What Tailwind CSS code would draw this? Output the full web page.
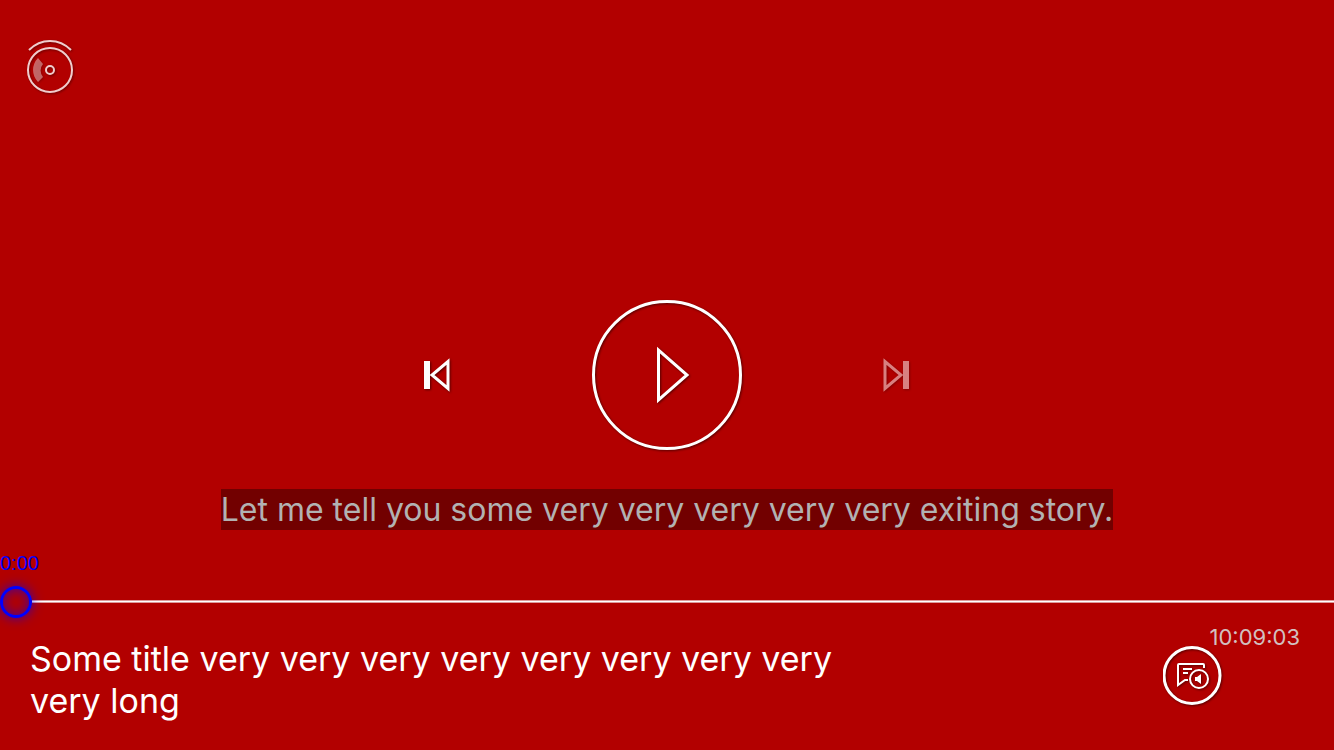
<!DOCTYPE html>
<html lang="en">
<head>
<meta charset="utf-8">
<meta name="viewport" content="width=device-width, initial-scale=1">
<title>Video player</title>
<script src="https://cdn.jsdelivr.net/npm/@tailwindcss/browser@4"></script>
</head>
<body class="bg-[#b20000] font-['Inter','Liberation_Sans',sans-serif] text-white">
<main class="flex min-h-screen flex-col overflow-hidden">
  <header class="flex flex-1 basis-0 items-start px-6">
    <button type="button" aria-label="Camera" class="mt-9 opacity-80">
      <svg class="block h-[60px] w-[52px] drop-shadow-[1px_1px_1px_rgba(0,0,0,0.5)]" viewBox="0 0 52 60" fill="none" stroke="#fff" stroke-width="2">
        <path d="M5 14Q14 5 26 5T47 14"/>
        <circle cx="26" cy="34" r="22"/>
        <circle cx="26" cy="34" r="4"/>
        <path d="M14 22A17 17 0 0 0 14 46L19 41A10 10 0 0 1 19 28Z" fill="#fff" stroke="none" opacity=".5"/>
      </svg>
    </button>
  </header>

  <div class="flex items-center justify-center gap-[137px]">
    <button type="button" aria-label="Previous">
      <svg class="block h-9 w-8 drop-shadow-[1px_1px_1px_rgba(0,0,0,0.5)]" viewBox="0 0 32 36">
        <path d="M2 4H8V32H2Z" fill="#fff"/>
        <path d="M26 4.5V31.5L10 18Z" fill="none" stroke="#fff" stroke-width="3"/>
      </svg>
    </button>
    <button type="button" aria-label="Play">
      <svg class="block h-[152px] w-[152px] drop-shadow-[1px_1px_1px_rgba(0,0,0,0.5)]" viewBox="0 0 152 152" fill="none" stroke="#fff" stroke-width="3">
        <circle cx="76" cy="76" r="73.5"/>
        <path d="M67.5 51V101L96 76Z"/>
      </svg>
    </button>
    <button type="button" aria-label="Next" class="opacity-50" disabled>
      <svg class="block h-9 w-8 drop-shadow-[1px_1px_1px_rgba(0,0,0,0.5)]" viewBox="0 0 32 36">
        <path d="M23 4H29V32H23Z" fill="#fff"/>
        <path d="M5 4.5V31.5L21 18Z" fill="none" stroke="#fff" stroke-width="3"/>
      </svg>
    </button>
  </div>

  <section class="flex flex-1 basis-0 flex-col">
    <p class="mt-[38px] self-center bg-[#720000] text-[32px] leading-[41px] text-[#b2b2b2]">Let me tell you some very very very very very exiting story.</p>
    <label for="seek" class="mt-[21px] font-['Liberation_Sans',sans-serif] text-[20px] leading-6 text-[#0000ff]">0:00</label>
    <input id="seek" type="range" min="0" max="100" value="0" class="mt-[11px] block h-8 w-full appearance-none bg-transparent [&::-webkit-slider-runnable-track]:h-8 [&::-webkit-slider-runnable-track]:bg-[linear-gradient(to_right,#b20000_32px,transparent_32px),linear-gradient(to_bottom,transparent_14px,#dd9a9a_14px,#dd9a9a_15px,#fff_15px,#fff_16px,#dd9a9a_16px,#dd9a9a_17px,transparent_17px)] [&::-webkit-slider-thumb]:h-8 [&::-webkit-slider-thumb]:w-8 [&::-webkit-slider-thumb]:appearance-none [&::-webkit-slider-thumb]:rounded-full [&::-webkit-slider-thumb]:border-3 [&::-webkit-slider-thumb]:border-[#0000ff] [&::-webkit-slider-thumb]:bg-transparent [&::-webkit-slider-thumb]:shadow-[0_0_12px_rgba(0,0,255,0.7),inset_0_0_12px_rgba(0,0,255,0.6)]">
    <footer class="flex items-start justify-between pr-[34px] pl-[30px]">
      <h1 class="mt-5 max-w-[820px] text-[34px] leading-[42px]">Some title very very very very very very very very very long</h1>
      <div class="mt-2 flex w-[137px] flex-col items-start">
        <time class="self-end text-[22px] leading-[22px] text-[#d2c0c0]">10:09:03</time>
        <button type="button" aria-label="Audio and subtitles" class="-mt-[2px]">
          <svg class="block h-[60px] w-[60px] drop-shadow-[1px_1px_1px_rgba(0,0,0,0.5)]" viewBox="0 0 60 60" fill="none" stroke="#fff" stroke-width="2">
            <circle cx="29" cy="29.5" r="28" stroke-width="3"/>
            <path d="M41 22V19Q41 18 40 18H16Q15 18 15 19V39L22 34H25"/>
            <path d="M20 23H29M20 27H25"/>
            <circle cx="36" cy="33" r="9"/>
            <path d="M32 31H34L38 28V38L34 35H32Z" fill="#fff" stroke="none"/>
          </svg>
        </button>
      </div>
    </footer>
  </section>
</main>
</body>
</html>
